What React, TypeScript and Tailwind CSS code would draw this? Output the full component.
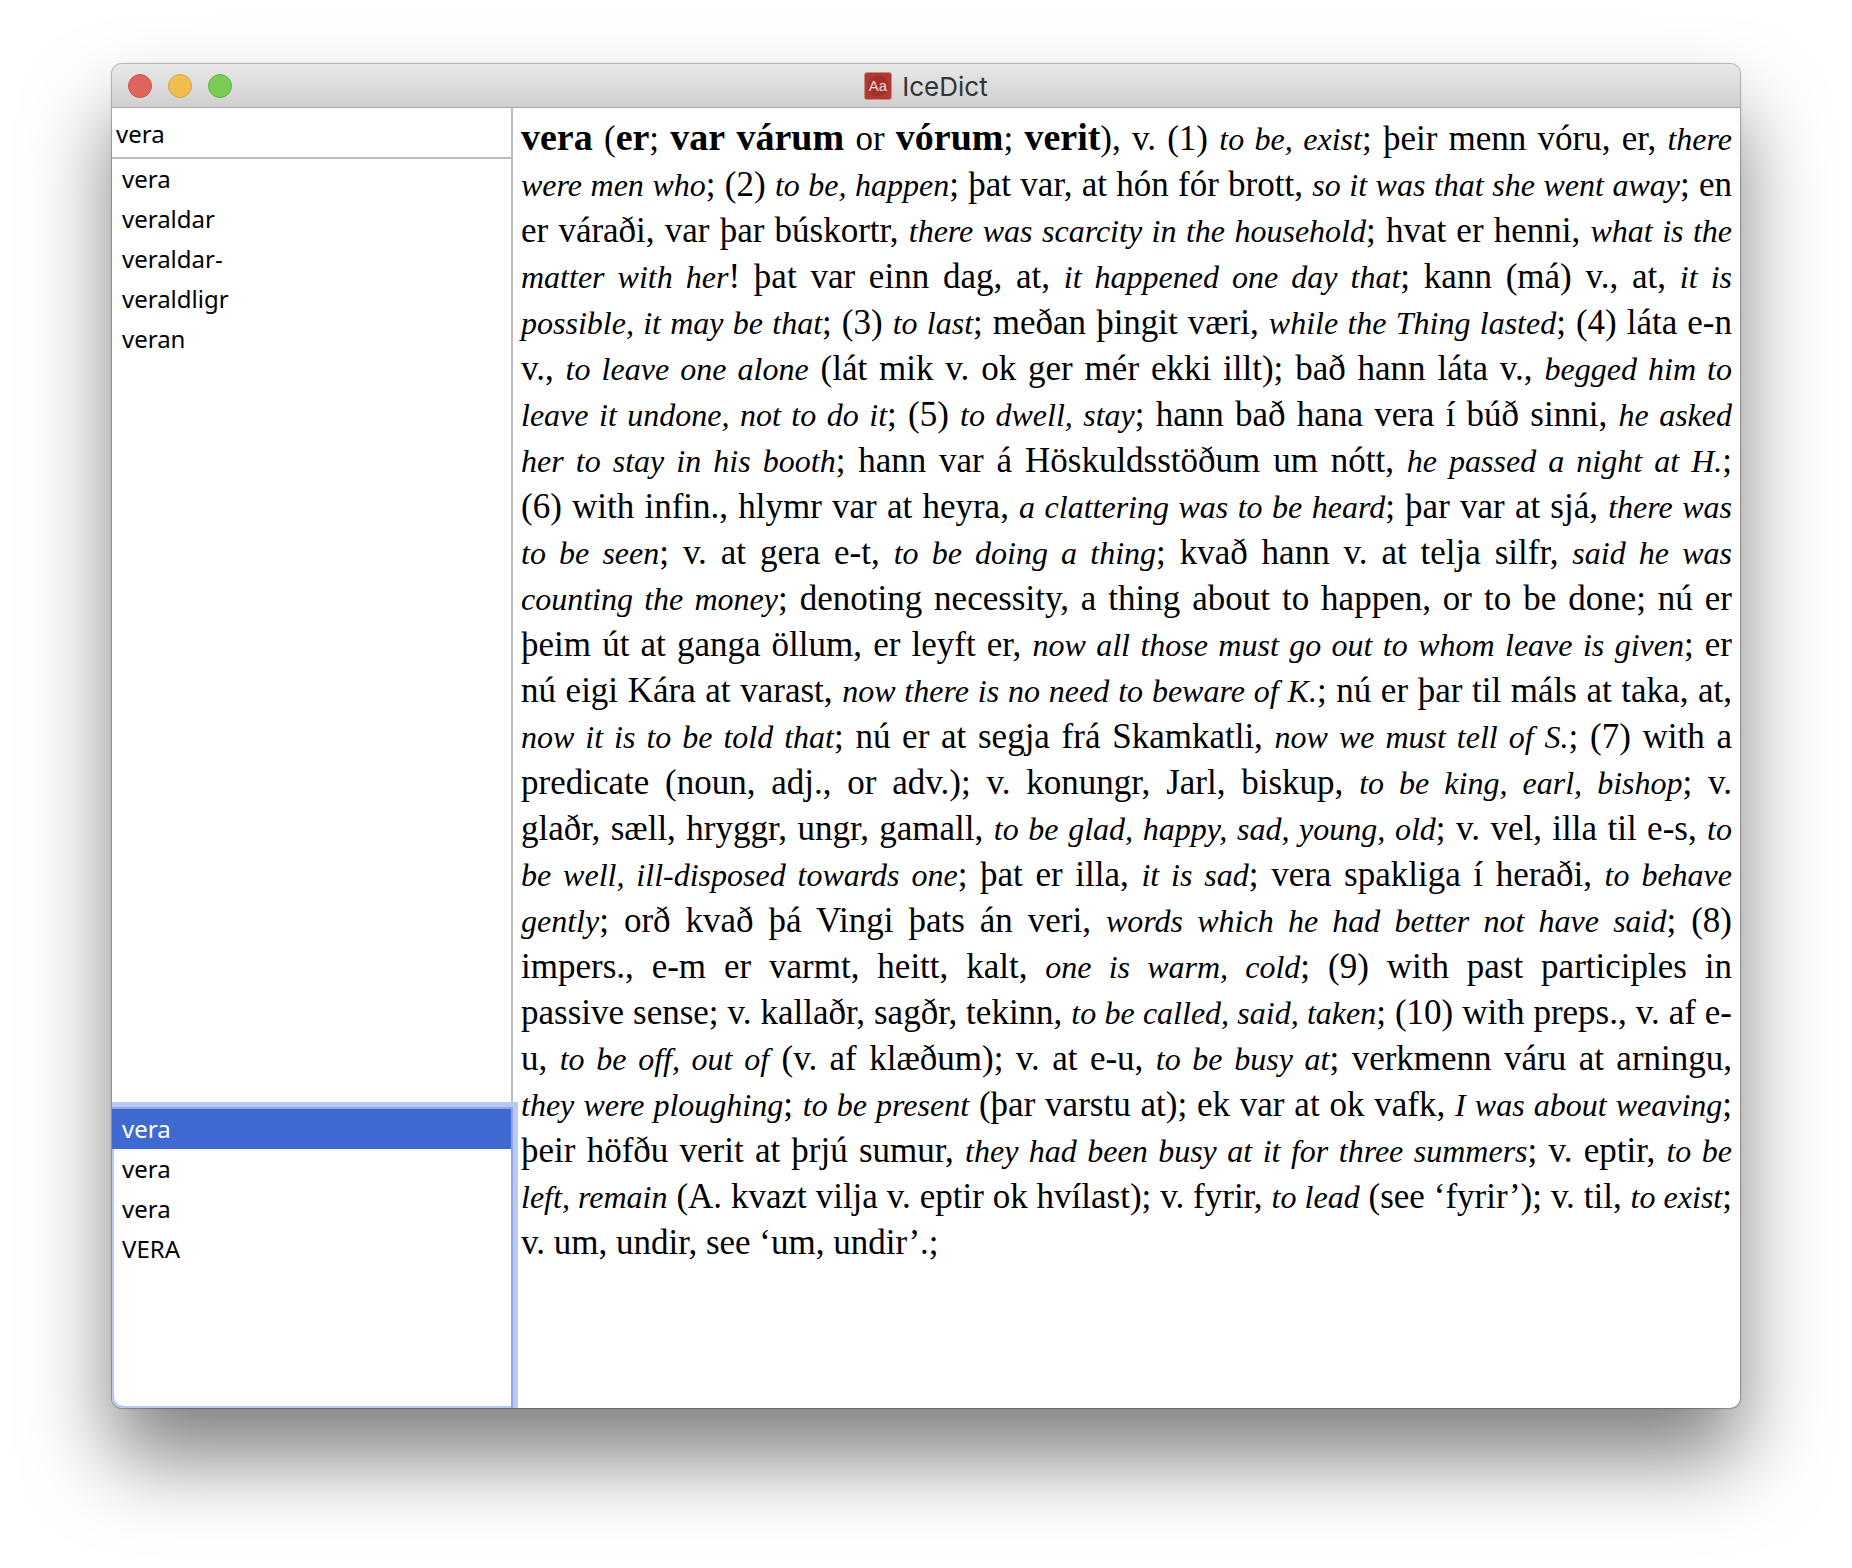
import React, { useState } from "react";

const matches = ["vera", "veraldar", "veraldar-", "veraldligr", "veran"];
const entries = ["vera", "vera", "vera", "VERA"];

// "*…*" marks bold headword forms, "_…_" marks italic translations.
const definition = [
  "*vera* (*er*; *var várum* or *vórum*; *verit*), v. (1) _to be, exist_; þeir menn vóru, er, _there_",
  "_were men who_; (2) _to be, happen_; þat var, at hón fór brott, _so it was that she went away_; en",
  "er váraði, var þar búskortr, _there was scarcity in the household_; hvat er henni, _what is the_",
  "_matter with her_! þat var einn dag, at, _it happened one day that_; kann (má) v., at, _it is_",
  "_possible, it may be that_; (3) _to last_; meðan þingit væri, _while the Thing lasted_; (4) láta e-n",
  "v., _to leave one alone_ (lát mik v. ok ger mér ekki illt); bað hann láta v., _begged him to_",
  "_leave it undone, not to do it_; (5) _to dwell, stay_; hann bað hana vera í búð sinni, _he asked_",
  "_her to stay in his booth_; hann var á Höskuldsstöðum um nótt, _he passed a night at H._;",
  "(6) with infin., hlymr var at heyra, _a clattering was to be heard_; þar var at sjá, _there was_",
  "_to be seen_; v. at gera e-t, _to be doing a thing_; kvað hann v. at telja silfr, _said he was_",
  "_counting the money_; denoting necessity, a thing about to happen, or to be done; nú er",
  "þeim út at ganga öllum, er leyft er, _now all those must go out to whom leave is given_; er",
  "nú eigi Kára at varast, _now there is no need to beware of K._; nú er þar til máls at taka, at,",
  "_now it is to be told that_; nú er at segja frá Skamkatli, _now we must tell of S._; (7) with a",
  "predicate (noun, adj., or adv.); v. konungr, Jarl, biskup, _to be king, earl, bishop_; v.",
  "glaðr, sæll, hryggr, ungr, gamall, _to be glad, happy, sad, young, old_; v. vel, illa til e-s, _to_",
  "_be well, ill-disposed towards one_; þat er illa, _it is sad_; vera spakliga í heraði, _to behave_",
  "_gently_; orð kvað þá Vingi þats án veri, _words which he had better not have said_; (8)",
  "impers., e-m er varmt, heitt, kalt, _one is warm, cold_; (9) with past participles in",
  "passive sense; v. kallaðr, sagðr, tekinn, _to be called, said, taken_; (10) with preps., v. af e-",
  "u, _to be off, out of_ (v. af klæðum); v. at e-u, _to be busy at_; verkmenn váru at arningu,",
  "_they were ploughing_; _to be present_ (þar varstu at); ek var at ok vafk, _I was about weaving_;",
  "þeir höfðu verit at þrjú sumur, _they had been busy at it for three summers_; v. eptir, _to be_",
  "_left, remain_ (A. kvazt vilja v. eptir ok hvílast); v. fyrir, _to lead_ (see ‘fyrir’); v. til, _to exist_;",
  "v. um, undir, see ‘um, undir’.;",
];

function Line({ text }: { text: string }) {
  return (
    <span className="block whitespace-nowrap [text-align-last:justify] last:[text-align-last:left]">
      {text.split(/(\*[^*]+\*|_[^_]+_)/).map((part, i) => {
        if (part.startsWith("*"))
          return (
            <b key={i} className="text-[38px] leading-none">
              {part.slice(1, -1)}
            </b>
          );
        if (part.startsWith("_"))
          return (
            <i key={i} className="text-[32px] leading-none">
              {part.slice(1, -1)}
            </i>
          );
        return part;
      })}
    </span>
  );
}

function WordList({
  label,
  words,
  selected,
  onSelect,
}: {
  label: string;
  words: string[];
  selected: number;
  onSelect: (i: number) => void;
}) {
  return (
    <ul aria-label={label}>
      {words.map((word, i) => (
        <li key={i}>
          <button
            type="button"
            onClick={() => onSelect(i)}
            className={
              i === selected
                ? "block h-10 w-full bg-[#3f6ad2] pl-2.5 text-left text-white"
                : "block h-10 w-full pl-2.5 text-left"
            }
          >
            {word}
          </button>
        </li>
      ))}
    </ul>
  );
}

export default function App() {
  const [query, setQuery] = useState("vera");
  const [match, setMatch] = useState(-1);
  const [entry, setEntry] = useState(0);

  return (
    <div className="flex min-h-screen flex-col bg-white px-28 pt-16 pb-40 text-black">
      <main className="flex flex-1 flex-col overflow-hidden rounded-[10px] bg-white shadow-[0_0_1px_1px_rgba(0,0,0,0.28),0_50px_84px_rgba(0,0,0,0.5)]">
        <header className="grid h-11 shrink-0 grid-cols-[1fr_auto_1fr] items-center border-b border-[#a9a9a9] bg-linear-to-b from-[#e8e8e8] to-[#d0d0d0] px-4">
          <div className="flex gap-4">
            <button type="button" aria-label="Close" className="size-6 rounded-full border border-[#cf544d] bg-[#de655e]" />
            <button type="button" aria-label="Minimize" className="size-6 rounded-full border border-[#d3a544] bg-[#efbe4f]" />
            <button type="button" aria-label="Zoom" className="size-6 rounded-full border border-[#62b143] bg-[#79cb54]" />
          </div>
          <div className="flex items-center gap-2.5">
            <svg viewBox="0 0 28 28" className="size-7" aria-hidden="true">
              <rect x="0.5" y="0.5" width="27" height="27" rx="2.5" fill="#b03a31" stroke="#c98a84" />
              <circle cx="14" cy="14" r="10.5" fill="#a33028" />
              <text x="14" y="19" textAnchor="middle" fontSize="15" fontFamily="Liberation Sans, sans-serif" fill="#f3dcda">
                Aa
              </text>
            </svg>
            <h1 className="pt-0.5 font-[Inter,sans-serif] text-[26px] leading-8 text-[#333333]">IceDict</h1>
          </div>
        </header>

        <div className="flex flex-1">
          <aside className="relative z-10 flex w-[401px] shrink-0 flex-col font-['Noto_Sans',sans-serif] text-[24px] leading-10">
            <div className="border-r-2 border-b-2 border-[#bdbdbd]">
              <input
                type="text"
                aria-label="Search"
                value={query}
                onChange={(e) => setQuery(e.target.value)}
                className="block h-[49px] w-full pt-0.5 pl-1 outline-none"
              />
            </div>
            <div className="flex-1 border-r-2 border-[#bdbdbd]">
              <WordList label="Matches" words={matches} selected={match} onSelect={setMatch} />
            </div>
            <div className="h-[301px] rounded-bl-[10px] border-t-2 border-r-2 border-[#92a5e0] shadow-[0_0_0_5px_#b7c9f5,inset_2px_-2px_0_#b7c9f5]">
              <WordList label="Entries" words={entries} selected={entry} onSelect={setEntry} />
            </div>
          </aside>

          <article className="min-w-0 flex-1 px-2 pt-2 font-['Liberation_Serif',serif] text-[35px] leading-[46px]">
            <p>
              {definition.map((line, i) => (
                <Line key={i} text={line} />
              ))}
            </p>
          </article>
        </div>
      </main>
    </div>
  );
}
